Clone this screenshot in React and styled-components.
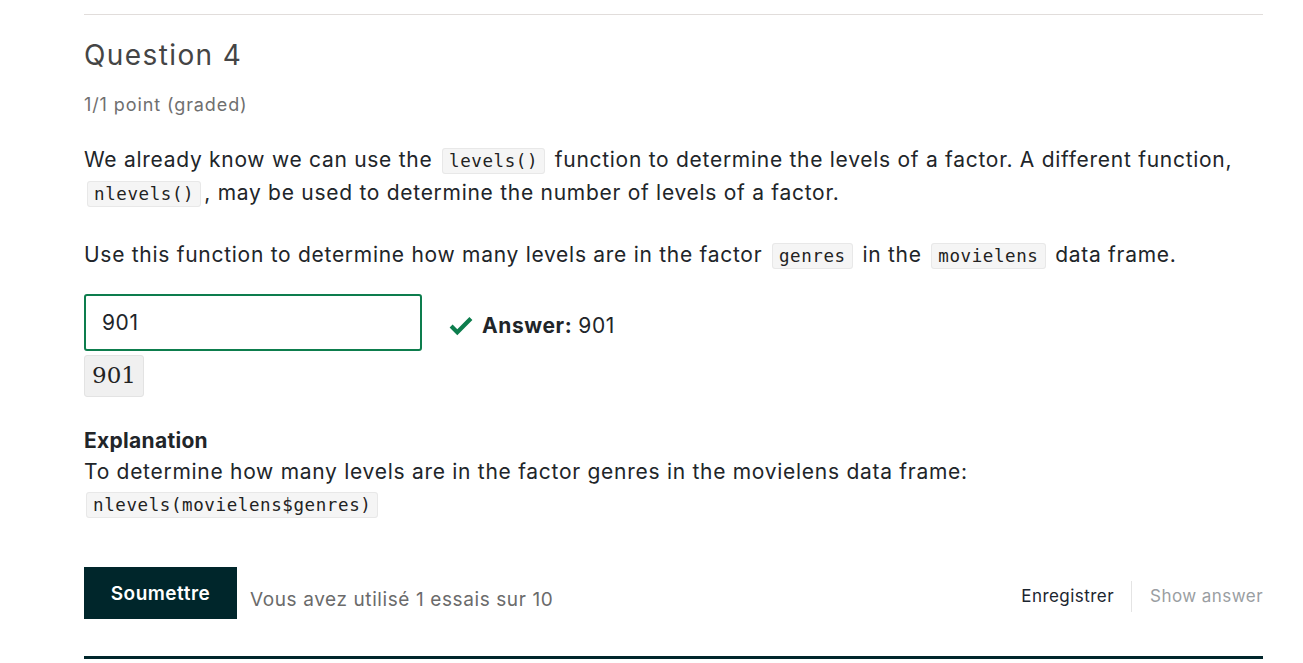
import React from 'react';
import styled, { createGlobalStyle } from 'styled-components';

const GlobalStyle = createGlobalStyle`
  html, body {
    margin: 0;
    padding: 0;
    background: #fff;
  }
  body {
    font-family: Inter, "Noto Sans", sans-serif;
    color: #212529;
  }
`;

const Page = styled.div`
  width: 1179px;
  margin-left: 84px;
  padding-top: 14px;
`;

const TopRule = styled.hr`
  margin: 0;
  border: 0;
  border-top: 1px solid #e1dddb;
`;

const Title = styled.h3`
  margin: 22px 0 0;
  font-size: 28px;
  font-weight: 400;
  letter-spacing: 1.4px;
  line-height: 36px;
  color: #454545;
`;

const Points = styled.div`
  margin-top: 20px;
  font-size: 18px;
  letter-spacing: 0.9px;
  line-height: 24px;
  color: #6f6f6f;
`;

const Para = styled.p`
  margin: ${p => p.$top}px 0 0;
  font-size: 21px;
  letter-spacing: 0.72px;
  line-height: 32px;
  color: #212529;
`;

const Code = styled.code`
  font-family: "DejaVu Sans Mono", "Liberation Mono", monospace;
  font-size: 17.5px;
  letter-spacing: 0.6px;
  background: #f5f5f5;
  border: 1px solid #e8e8e8;
  border-radius: 3px;
  padding: 2px 6px;
  margin: 0 3px;
  color: #222;
`;

const AnswerRow = styled.div`
  display: flex;
  align-items: center;
  margin-top: 22px;
`;

const Input = styled.div`
  box-sizing: border-box;
  width: 338px;
  height: 57px;
  border: 2px solid #0d7d4d;
  border-radius: 3px;
  padding: 0 16px;
  display: flex;
  align-items: center;
  font-size: 21px;
  letter-spacing: 0.6px;
  color: #212529;
`;

const Status = styled.div`
  display: flex;
  align-items: center;
  margin-left: 27px;
  margin-top: 6px;
  font-size: 21px;
  letter-spacing: 0.6px;
  color: #212529;
  b {
    font-weight: 700;
    margin: 0 6px 0 9px;
  }
`;

const Preview = styled.div`
  display: inline-block;
  margin-top: 4px;
  padding: 3px 7px 4px;
  background: #f0f0f0;
  border: 1px solid #e3e3e3;
  border-radius: 3px;
  font-family: "DejaVu Serif", "Liberation Serif", serif;
  font-size: 23px;
  line-height: 33px;
  color: #222;
`;

const ExplTitle = styled.div`
  margin-top: 29px;
  font-size: 21px;
  letter-spacing: 0.3px;
  font-weight: 700;
  line-height: 30px;
  color: #212529;
`;

const ExplText = styled.div`
  font-size: 21px;
  letter-spacing: 0.72px;
  line-height: 32px;
  color: #212529;
`;

const ExplCode = styled(Code)`
  margin: 0 0 0 2px;
`;

const Actions = styled.div`
  display: flex;
  align-items: flex-end;
  margin-top: 46px;
`;

const Submit = styled.button`
  width: 153px;
  height: 52px;
  border: 0;
  border-radius: 0;
  background: #00262b;
  color: #fff;
  font-family: Inter, sans-serif;
  font-size: 19px;
  letter-spacing: 0.5px;
  font-weight: 600;
  align-self: flex-start;
  padding: 0;
`;

const Attempts = styled.span`
  margin-left: 13px;
  margin-bottom: 8px;
  font-size: 19px;
  letter-spacing: 0.6px;
  color: #6b6b6b;
`;

const Right = styled.div`
  margin-left: auto;
  padding-top: 6px;
  display: flex;
  align-items: center;
  align-self: center;
`;

const ActionLink = styled.span`
  font-size: 17px;
  letter-spacing: 0.45px;
  color: ${p => (p.$muted ? '#9a9ea2' : '#1b2530')};
  padding: 0 ${p => (p.$muted ? '0' : '17px')} 0 ${p => (p.$muted ? '18px' : '0')};
`;

const Sep = styled.span`
  width: 1px;
  height: 31px;
  background: #e4e4e4;
`;

const BottomRule = styled.div`
  margin-top: 37px;
  height: 3px;
  background: #00262b;
`;

const Check = () => (
  <svg width="24" height="20" viewBox="0 0 24 20">
    <path
      d="M8.3 19.2 L0.6 11.5 L3.6 8.5 L8.3 13.2 L20.4 1.1 L23.4 4.1 Z"
      fill="#0d7d4d"
    />
  </svg>
);

export default function App() {
  return (
    <>
      <GlobalStyle />
      <Page>
        <TopRule />
        <Title>Question 4</Title>
        <Points>1/1 point (graded)</Points>
        <Para $top={27}>
          We already know we can use the <Code>levels()</Code> function to determine the levels of a
          factor. A different function, <Code>nlevels()</Code>, may be used to determine the number of
          levels of a factor.
        </Para>
        <Para $top={29}>
          Use this function to determine how many levels are in the factor <Code>genres</Code> in the{' '}
          <Code>movielens</Code> data frame.
        </Para>
        <AnswerRow>
          <Input>901</Input>
          <Status>
            <Check />
            <b>Answer:</b>901
          </Status>
        </AnswerRow>
        <Preview>901</Preview>
        <ExplTitle>Explanation</ExplTitle>
        <ExplText>
          To determine how many levels are in the factor genres in the movielens data frame:
          <br />
          <ExplCode>nlevels(movielens$genres)</ExplCode>
        </ExplText>
        <Actions>
          <Submit>Soumettre</Submit>
          <Attempts>Vous avez utilisé 1 essais sur 10</Attempts>
          <Right>
            <ActionLink>Enregistrer</ActionLink>
            <Sep />
            <ActionLink $muted>Show answer</ActionLink>
          </Right>
        </Actions>
        <BottomRule />
      </Page>
    </>
  );
}
